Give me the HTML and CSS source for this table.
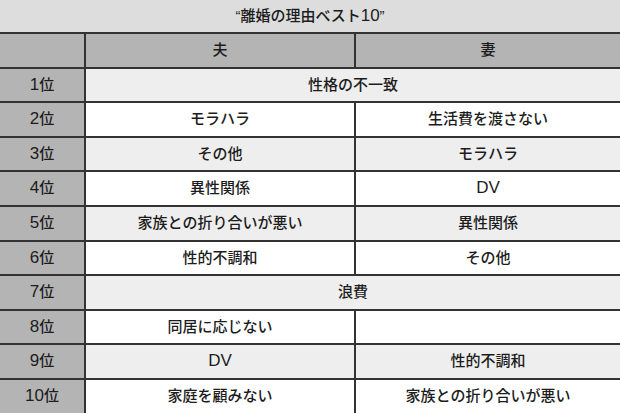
FILE: index.html
```html
<!DOCTYPE html>
<html lang="ja">
<head>
<meta charset="utf-8">
<link rel="stylesheet" href="styles.css">
</head>
<body>
<div class="page">
  <div class="title">“離婚の理由ベスト<span class="lat">10</span>”</div>
  <div class="grid">
    <div class="cell rank"></div>
    <div class="cell head">夫</div>
    <div class="cell head">妻</div>

    <div class="cell rank"><span class="lat">1</span>位</div>
    <div class="cell odd span">性格の不一致</div>

    <div class="cell rank"><span class="lat">2</span>位</div>
    <div class="cell even">モラハラ</div>
    <div class="cell even">生活費を渡さない</div>

    <div class="cell rank"><span class="lat">3</span>位</div>
    <div class="cell odd">その他</div>
    <div class="cell odd">モラハラ</div>

    <div class="cell rank"><span class="lat">4</span>位</div>
    <div class="cell even">異性関係</div>
    <div class="cell even"><span class="lat">DV</span></div>

    <div class="cell rank"><span class="lat">5</span>位</div>
    <div class="cell odd">家族との折り合いが悪い</div>
    <div class="cell odd">異性関係</div>

    <div class="cell rank"><span class="lat">6</span>位</div>
    <div class="cell even">性的不調和</div>
    <div class="cell even">その他</div>

    <div class="cell rank"><span class="lat">7</span>位</div>
    <div class="cell odd span">浪費</div>

    <div class="cell rank"><span class="lat">8</span>位</div>
    <div class="cell even">同居に応じない</div>
    <div class="cell even"></div>

    <div class="cell rank"><span class="lat">9</span>位</div>
    <div class="cell odd"><span class="lat">DV</span></div>
    <div class="cell odd">性的不調和</div>

    <div class="cell rank"><span class="lat">10</span>位</div>
    <div class="cell even">家庭を顧みない</div>
    <div class="cell even">家族との折り合いが悪い</div>
  </div>
</div>
</body>
</html>
```

FILE: styles.css
```css
html, body {
  margin: 0;
  padding: 0;
  background: #ffffff;
}

.page {
  width: 620px;
  height: 413px;
  overflow: hidden;
  font-family: "Liberation Sans", "Noto Sans CJK JP", sans-serif;
  font-weight: 500;
  font-size: 15px;
  color: #1c1c1c;
}

.lat {
  font-family: "Liberation Sans", sans-serif;
  font-size: 17px;
  line-height: 1;
}

.title {
  height: 32px;
  line-height: 32px;
  background: #dddddd;
  text-align: center;
}

.grid {
  display: grid;
  grid-template-columns: 84px 268px 264px;
  grid-auto-rows: 32.6px;
  gap: 2px;
  padding-top: 2px;
  background: #333333;
}

.cell {
  text-align: center;
  line-height: 32.6px;
  white-space: nowrap;
}

.rank {
  background: #b4b4b4;
}

.head {
  background: #b4b4b4;
}

.odd {
  background: #eeeeee;
}

.even {
  background: #ffffff;
}

.span {
  grid-column: span 2;
}
```
